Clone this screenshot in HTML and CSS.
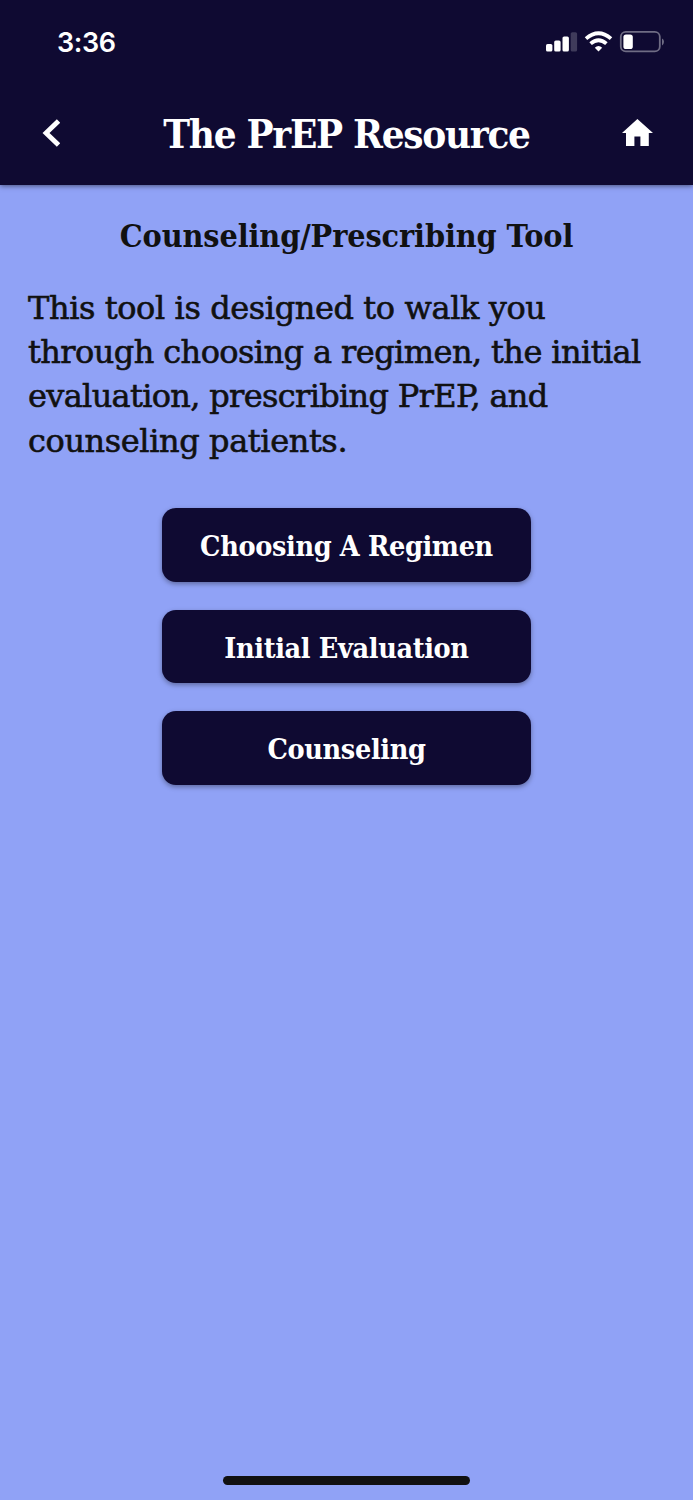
FILE: index.html
```html
<!DOCTYPE html>
<html lang="en">

<head>
    <meta charset="UTF-8">
    <meta name="viewport" content="width=device-width, initial-scale=1.0">
    <title>The PrEP Resource</title>
    <link rel="stylesheet" href="styles.css">
</head>

<body>
    <header class="header">
        <div class="status">
            <span class="time">3:36</span>
            <svg class="status-icons" width="120" height="24" viewBox="0 0 120 24" fill="#fff">
                <rect x="1" y="14" width="6.4" height="7.6" rx="1.6" />
                <rect x="9.2" y="10.4" width="6.4" height="11.2" rx="1.6" />
                <rect x="17.5" y="6.4" width="6.4" height="15.2" rx="1.6" />
                <rect x="25.7" y="2.2" width="6.4" height="19.4" rx="1.6" fill-opacity=".2" />
                <g fill="none" stroke="#fff" stroke-width="3.8">
                    <path d="M41 8.6Q53.5-2 66 8.6" />
                    <path d="M45.6 13.6Q53.5 6.8 61.4 13.6" />
                </g>
                <path d="M49.8 17.8Q53.5 14.4 57.2 17.8L53.5 21.6Z" />
                <rect x="75.8" y="1.8" width="39" height="19.6" rx="5" fill="none" stroke="#fff" stroke-opacity=".4" stroke-width="1.8" />
                <rect x="78.4" y="4.4" width="9.4" height="14.6" rx="2.6" />
                <path d="M117 8.4Q119 9.4 119 11.8T117 15.4Z" fill-opacity=".4" />
            </svg>
        </div>
        <div class="navbar">
            <a class="nav-link" href="#" aria-label="Back">
                <svg width="20" height="30" viewBox="0 0 20 30">
                    <path d="M18.5 3L6 15L18.5 27" fill="none" stroke="#fff" stroke-width="4.8" />
                </svg>
            </a>
            <h1 class="title">The PrEP Resource</h1>
            <a class="nav-link" href="#" aria-label="Home">
                <svg width="32" height="28" viewBox="0 0 32 28">
                    <path d="M16.4 0L32 14H27.8V27H19.4V17.5H13.4V27H5V14H1Z" fill="#fff" />
                </svg>
            </a>
        </div>
    </header>

    <main class="content">
        <h2 class="heading">Counseling/Prescribing Tool</h2>
        <p class="intro">
            This tool is designed to walk you<br>
            <span class="snug">through choosing a regimen, the initial</span><br>
            <span class="tight">evaluation, prescribing PrEP, and</span><br>
            counseling patients.
        </p>
        <nav class="buttons">
            <a class="button" href="#">Choosing A Regimen</a>
            <a class="button" href="#">Initial Evaluation</a>
            <a class="button" href="#">Counseling</a>
        </nav>
    </main>

    <div class="home-indicator"></div>
</body>

</html>
```

FILE: styles.css
```css
* {
    box-sizing: border-box;
}

body {
    display: flex;
    flex-direction: column;
    height: 1500px;
    margin: 0;
    background: #90a2f6;
    color: #111;
    font-family: 'Roboto Slab', 'DejaVu Serif Condensed', 'DejaVu Serif', serif;
}

.header {
    height: 184.6px;
    background: #0f0a32;
    color: #fff;
    box-shadow: 0 1px 5px rgba(0, 0, 0, 0.5);
}

.status {
    display: flex;
    justify-content: space-between;
    align-items: center;
    height: 84px;
    padding: 0 28px 0 57px;
}

.time {
    padding-top: 2px;
    font: 600 27px/32px Inter, sans-serif;
    letter-spacing: -0.4px;
}

.navbar {
    display: flex;
    justify-content: space-between;
    align-items: center;
    height: 98px;
    padding: 0 40px;
}

.nav-link {
    display: flex;
    width: 32px;
}

.title {
    margin: 0;
    font-size: 40px;
    font-weight: bold;
    white-space: nowrap;
    letter-spacing: -1.3px;
}

.content {
    flex: 1;
    padding: 29px 28px 0;
}

.heading {
    margin: 0;
    font-size: 32px;
    font-weight: bold;
    line-height: 44px;
    text-align: center;
    white-space: nowrap;
    letter-spacing: -0.1px;
}

.intro {
    margin: 28px 0 45px;
    font-family: 'Roboto Slab', 'DejaVu Serif', serif;
    font-size: 32px;
    line-height: 44.4px;
    white-space: nowrap;
    letter-spacing: -0.4px;
    -webkit-text-stroke: 0.6px #111;
}

.snug {
    letter-spacing: -0.58px;
}

.tight {
    letter-spacing: -0.67px;
}

.buttons {
    display: flex;
    flex-direction: column;
    align-items: center;
    gap: 28px;
}

.button {
    width: 369px;
    height: 73.6px;
    border-radius: 14px;
    background: #0f0a32;
    box-shadow: 0 2px 5px rgba(0, 0, 0, 0.35);
    color: #fff;
    font-size: 28.5px;
    font-weight: bold;
    line-height: 76px;
    text-align: center;
    text-decoration: none;
    letter-spacing: -0.35px;
}

.home-indicator {
    width: 247px;
    height: 9px;
    margin: 0 auto 15px;
    border-radius: 5px;
    background: #111;
}
```
